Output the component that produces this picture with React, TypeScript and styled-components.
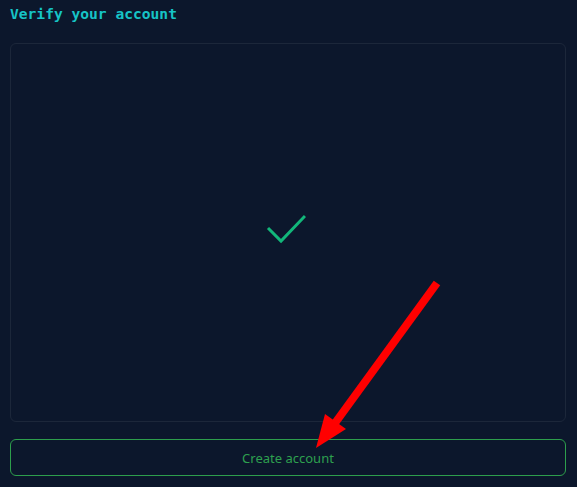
import React from 'react';
import styled, {createGlobalStyle} from 'styled-components';

const GlobalStyle = createGlobalStyle`
    html, body {
        margin: 0;
        padding: 0;
        background: #0c172c;
    }
`;

const Page = styled.div`
    position: relative;
    width: 577px;
    height: 487px;
    box-sizing: border-box;
    padding: 4px 11px 0 10px;
    display: flex;
    flex-direction: column;
    background: #0c172c;
    overflow: hidden;
`;

const Title = styled.h1`
    margin: 0;
    font-family: "DejaVu Sans Mono", "Liberation Mono", monospace;
    font-weight: 700;
    font-size: 14.6px;
    line-height: 20px;
    color: #16c4c6;
`;

const Panel = styled.div`
    margin-top: 19px;
    height: 379px;
    box-sizing: border-box;
    border: 1px solid #1c273a;
    border-radius: 6px;
    display: flex;
    align-items: center;
    justify-content: center;
`;

const Check = styled.svg`
    width: 40px;
    height: 30px;
    margin-left: -4px;
    margin-top: -7px;
`;

const Button = styled.button`
    margin-top: 17px;
    height: 37px;
    width: 100%;
    box-sizing: border-box;
    background: transparent;
    border: 1px solid #2d9e4c;
    border-radius: 6px;
    color: #2ea04f;
    font-family: "Noto Sans", "Open Sans", sans-serif;
    font-size: 13px;
    padding-top: 2px;
    cursor: pointer;
`;

const Arrow = styled.svg`
    position: absolute;
    left: 0;
    top: 0;
    pointer-events: none;
`;

const App: React.FC = () => {
    return (
        <>
            <GlobalStyle />
            <Page>
                <Title>Verify your account</Title>
                <Panel>
                    <Check viewBox="0 0 40 30">
                        <polyline points="2,14 15,27 39,2" fill="none" stroke="#12b77a" strokeWidth="3" />
                    </Check>
                </Panel>
                <Button>Create account</Button>
                <Arrow width="577" height="487" viewBox="0 0 577 487">
                    <line x1="437" y1="283" x2="330" y2="430" stroke="#ff0000" strokeWidth="8" />
                    <polygon points="316,448 325,414 346,429" fill="#ff0000" />
                </Arrow>
            </Page>
        </>
    );
};

export default App;
